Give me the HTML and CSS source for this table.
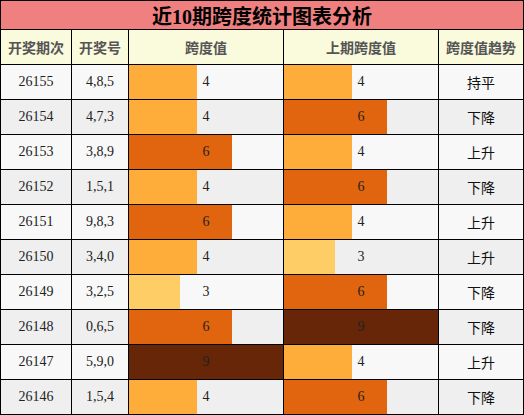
FILE: index.html
```html
<!DOCTYPE html>
<html lang="zh">
<head>
<meta charset="utf-8">
<title>近10期跨度统计图表分析</title>
<link rel="stylesheet" href="styles.css">
</head>
<body>
<div class="board">
  <div class="title">近10期跨度统计图表分析</div>
  <div class="th">开奖期次</div>
  <div class="th">开奖号</div>
  <div class="th">跨度值</div>
  <div class="th">上期跨度值</div>
  <div class="th">跨度值趋势</div>

  <div class="td odd">26155</div><div class="td odd">4,8,5</div>
  <div class="td odd bar"><span class="fill v4" style="width:44.444%"></span><span class="num">4</span></div>
  <div class="td odd bar"><span class="fill v4" style="width:44.444%"></span><span class="num">4</span></div>
  <div class="td odd cjk">持平</div>

  <div class="td even">26154</div><div class="td even">4,7,3</div>
  <div class="td even bar"><span class="fill v4" style="width:44.444%"></span><span class="num">4</span></div>
  <div class="td even bar"><span class="fill v6" style="width:66.667%"></span><span class="num">6</span></div>
  <div class="td even cjk">下降</div>

  <div class="td odd">26153</div><div class="td odd">3,8,9</div>
  <div class="td odd bar"><span class="fill v6" style="width:66.667%"></span><span class="num">6</span></div>
  <div class="td odd bar"><span class="fill v4" style="width:44.444%"></span><span class="num">4</span></div>
  <div class="td odd cjk">上升</div>

  <div class="td even">26152</div><div class="td even">1,5,1</div>
  <div class="td even bar"><span class="fill v4" style="width:44.444%"></span><span class="num">4</span></div>
  <div class="td even bar"><span class="fill v6" style="width:66.667%"></span><span class="num">6</span></div>
  <div class="td even cjk">下降</div>

  <div class="td odd">26151</div><div class="td odd">9,8,3</div>
  <div class="td odd bar"><span class="fill v6" style="width:66.667%"></span><span class="num">6</span></div>
  <div class="td odd bar"><span class="fill v4" style="width:44.444%"></span><span class="num">4</span></div>
  <div class="td odd cjk">上升</div>

  <div class="td even">26150</div><div class="td even">3,4,0</div>
  <div class="td even bar"><span class="fill v4" style="width:44.444%"></span><span class="num">4</span></div>
  <div class="td even bar"><span class="fill v3" style="width:33.333%"></span><span class="num">3</span></div>
  <div class="td even cjk">上升</div>

  <div class="td odd">26149</div><div class="td odd">3,2,5</div>
  <div class="td odd bar"><span class="fill v3" style="width:33.333%"></span><span class="num">3</span></div>
  <div class="td odd bar"><span class="fill v6" style="width:66.667%"></span><span class="num">6</span></div>
  <div class="td odd cjk">下降</div>

  <div class="td even">26148</div><div class="td even">0,6,5</div>
  <div class="td even bar"><span class="fill v6" style="width:66.667%"></span><span class="num">6</span></div>
  <div class="td even bar"><span class="fill v9" style="width:100%"></span><span class="num">9</span></div>
  <div class="td even cjk">下降</div>

  <div class="td odd">26147</div><div class="td odd">5,9,0</div>
  <div class="td odd bar"><span class="fill v9" style="width:100%"></span><span class="num">9</span></div>
  <div class="td odd bar"><span class="fill v4" style="width:44.444%"></span><span class="num">4</span></div>
  <div class="td odd cjk">上升</div>

  <div class="td even">26146</div><div class="td even">1,5,4</div>
  <div class="td even bar"><span class="fill v4" style="width:44.444%"></span><span class="num">4</span></div>
  <div class="td even bar"><span class="fill v6" style="width:66.667%"></span><span class="num">6</span></div>
  <div class="td even cjk">下降</div>
</div>
</body>
</html>
```

FILE: styles.css
```css
html, body {
  margin: 0;
  padding: 0;
  background: #ffffff;
}

.board {
  width: 524px;
  box-sizing: border-box;
  display: grid;
  grid-template-columns: 70px 56px 154px 154px 84px;
  grid-template-rows: 28px 34px repeat(10, 34px);
  gap: 1px;
  padding: 1px;
  background: #000000;
  font-family: "Liberation Serif", "Noto Sans CJK SC", serif;
  font-size: 14px;
  color: #222222;
}

.title {
  grid-column: 1 / -1;
  background: #f08080;
  color: #000000;
  font-weight: bold;
  font-size: 20px;
  display: flex;
  align-items: center;
  justify-content: center;
}

.th {
  background: #fafadc;
  color: #555555;
  font-weight: bold;
  font-family: "Noto Sans CJK SC", sans-serif;
  font-size: 14px;
  display: flex;
  align-items: center;
  justify-content: center;
}

.td {
  display: flex;
  align-items: center;
  justify-content: center;
}

.odd { background: #f8f8f8; }
.even { background: #efefef; }

.cjk {
  font-family: "Noto Sans CJK SC", sans-serif;
  color: #111111;
}

.bar {
  display: grid;
  grid-template: 1fr / 1fr;
  justify-content: stretch;
}

.fill {
  grid-area: 1 / 1;
  height: 100%;
  justify-self: start;
}

.num {
  grid-area: 1 / 1;
  align-self: center;
  justify-self: center;
  position: relative;
}

.v3 { background: #ffcd66; }
.v4 { background: #fead3b; }
.v6 { background: #e1640f; }
.v9 { background: #672607; }
```
